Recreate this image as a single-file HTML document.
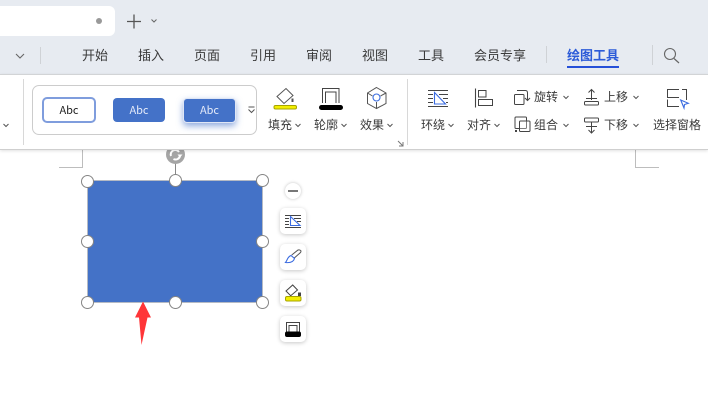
<!DOCTYPE html>
<html>
<head>
<meta charset="utf-8">
<style>
html,body{margin:0;padding:0;width:708px;height:413px;overflow:hidden;background:#fff}
body{position:relative;font-family:"Liberation Sans","Noto Sans CJK SC",sans-serif;color:#333}
.a{position:absolute}
.t{position:absolute;white-space:nowrap;line-height:16px;height:16px}
.tab{font-size:13px;top:48px;color:#3a3a3a}
.lb{font-size:12px;color:#3a3a3a}
.abc{position:absolute;box-sizing:border-box;text-align:center;font-family:"Noto Sans CJK SC","Liberation Sans",sans-serif;font-size:11px;line-height:24px;border-radius:4px}
.side{position:absolute;left:280px;width:26px;height:26px;background:#fff;border-radius:5px;box-shadow:0 1px 4px rgba(0,0,0,.22)}
.h{position:absolute;width:13px;height:13px;box-sizing:border-box;background:#fff;border:1px solid #858585;border-radius:50%}
svg{position:absolute;overflow:visible}
</style>
</head>
<body>
<div class="a" style="left:0;top:0;width:708px;height:74px;background:#e7ebf1"></div>
<div class="a" style="left:-10px;top:6px;width:125px;height:30px;background:#fff;border-radius:6px"></div>
<div class="a" style="left:96px;top:18px;width:6px;height:6px;background:#999;border-radius:50%"></div>
<svg style="left:0;top:0" width="708" height="74" fill="none">
<path d="M127 21.500H141M134 14.500V28.500" stroke="#555" stroke-width="1.300"/>
<path d="M151.500 19.500L154 22L156.500 19.500" stroke="#666"/>
<path d="M16 54L20 58L24 54" stroke="#666" stroke-width="1.100"/>
<path d="M40.500 47V64M546.500 46V63M652.500 45V65" stroke="#cfd2d6"/>
<circle cx="670" cy="54" r="5.500" stroke="#666" stroke-width="1.100"/>
<path d="M674 58.500L679 63" stroke="#666" stroke-width="1.200"/>
</svg>
<div class="t tab" style="left:82px">开始</div>
<div class="t tab" style="left:138px">插入</div>
<div class="t tab" style="left:194px">页面</div>
<div class="t tab" style="left:250px">引用</div>
<div class="t tab" style="left:306px">审阅</div>
<div class="t tab" style="left:362px">视图</div>
<div class="t tab" style="left:418px">工具</div>
<div class="t tab" style="left:474px">会员专享</div>
<div class="t tab" style="left:567px;color:#2c5bd8;font-weight:bold">绘图工具</div>
<div class="a" style="left:567px;top:66px;width:52px;height:2px;background:#2650d8"></div>

<div class="a" style="left:0;top:74px;width:708px;height:76px;box-sizing:border-box;background:#fff;border-top:1px solid #d2d4d6;border-bottom:1px solid #cfcfcf;box-shadow:0 1px 3px rgba(0,0,0,.12);z-index:3">
</div>

<div style="position:absolute;left:0;top:0;width:708px;height:150px;z-index:4">
<div class="a" style="left:23px;top:79px;width:1px;height:66px;background:#d8d8d8"></div>
<div class="a" style="left:407px;top:79px;width:1px;height:66px;background:#d8d8d8"></div>
<div class="a" style="left:32px;top:85px;width:225px;height:50px;box-sizing:border-box;border:1px solid #cccccc;border-radius:7px"></div>
<div class="abc" style="left:42px;top:97px;width:54px;height:26px;border:2px solid #7f9ddd;border-radius:5px;background:#fff;color:#222;line-height:22px">Abc</div>
<div class="abc" style="left:113px;top:98px;width:52px;height:24px;background:#4472c8;color:#e4eaf8">Abc</div>
<div class="abc" style="left:183px;top:98px;width:53px;height:25px;background:#4472c8;color:#e4eaf8;border:1px solid #dfe6f5;line-height:23px;box-shadow:0 3px 7px rgba(68,114,200,.6)">Abc</div>

<div class="t lb" style="left:268px;top:117px">填充</div>
<div class="t lb" style="left:314px;top:117px">轮廓</div>
<div class="t lb" style="left:360px;top:117px">效果</div>
<div class="t lb" style="left:421px;top:117px">环绕</div>
<div class="t lb" style="left:467px;top:117px">对齐</div>
<div class="t lb" style="left:534px;top:89px">旋转</div>
<div class="t lb" style="left:534px;top:117px">组合</div>
<div class="t lb" style="left:604px;top:89px">上移</div>
<div class="t lb" style="left:604px;top:117px">下移</div>
<div class="t lb" style="left:653px;top:117px">选择窗格</div>

<svg style="left:0;top:0" width="708" height="150" fill="none">
<!-- chevrons -->
<g stroke="#555">
<path d="M3.500 124L6 126.500L8.500 124M295.500 124L298 126.500L300.500 124M341.500 124L344 126.500L346.500 124M387.500 124L390 126.500L392.500 124M448.500 124L451 126.500L453.500 124M494.500 124L497 126.500L499.500 124M563.500 124L566 126.500L568.500 124M563.500 96L566 98.500L568.500 96M633.500 124L636 126.500L638.500 124M633.500 96L636 98.500L638.500 96"/>
</g>
<!-- gallery more -->
<path d="M248.500 107H254.500M248.500 109.500L251.500 112.500L254.500 109.500" stroke="#555"/>
<!-- fill -->
<path d="M277 96.500L286 88.500L293 95.500L284 103.500Z" stroke="#555" fill="#fff"/>
<rect x="291.500" y="98.500" width="2" height="3.500" fill="#555"/>
<rect x="274" y="105.500" width="22.500" height="3.500" rx="1.500" fill="#f3ee00" stroke="#a7a400"/>
<!-- outline -->
<path d="M322.500 103V88.500H339V103M325.500 103V92H336V103" stroke="#444"/>
<rect x="319" y="105" width="24" height="5" rx="2.500" fill="#000"/>
<!-- effect -->
<path d="M376.500 87.500L386 93V103.500L376.500 108.500L367.500 103.500V93Z M367.500 93L372.500 96M386 93L380.500 96M376.500 102V108" stroke="#555"/>
<circle cx="376.500" cy="97.500" r="3.500" stroke="#3c6ee0" stroke-width="1.100"/>
<!-- dialog launcher -->
<path d="M398 141L403 146M403 142V146H399" stroke="#777"/>
<!-- wrap -->
<path d="M428 90.500H448M428 106.500H448M428 94.500H433M428 98.500H433M428 102.500H433M439 94.500H448M443 98.500H448M446 102.500H448" stroke="#444"/>
<path d="M434.500 92.500V104H445.500Z" stroke="#3a6be0" stroke-width="1.100"/>
<!-- align -->
<path d="M475.500 88.500V107.500" stroke="#444" stroke-width="1.100"/>
<rect x="478.500" y="90.500" width="7.500" height="6.500" stroke="#444"/>
<rect x="478.500" y="99.500" width="14" height="6" stroke="#444"/>
<!-- rotate -->
<rect x="514.500" y="94.500" width="9.500" height="10" rx="1" stroke="#444"/>
<path d="M517 90.500H525.500Q527.500 90.500 527.500 93V100M525 98L527.500 100.500L530 98" stroke="#444"/>
<!-- group -->
<rect x="515" y="117" width="11.500" height="11.500" rx="1" stroke="#444"/>
<rect x="519.500" y="121" width="10.500" height="10.500" rx="1" stroke="#444" fill="#fff" fill-opacity=".3"/>
<rect x="515" y="130" width="2" height="2" fill="#444"/>
<!-- up -->
<path d="M591.500 90V100M588.500 92.500L591.500 89.500L594.500 92.500M586 98.500H597" stroke="#444"/>
<rect x="584.500" y="101.500" width="14" height="3.500" rx="1" stroke="#444"/>
<!-- down -->
<rect x="584.500" y="118" width="14" height="4" rx="1" stroke="#444"/>
<path d="M586 126.500H597M591.500 122V133M588.500 130L591.500 133L594.500 130" stroke="#444"/>
<!-- selection pane -->
<path d="M679 89.500H667.500V97.500H679M682 89.500H686.500V100M667.500 99.500V106.500H679" stroke="#444"/>
<path d="M680.700 100L688.300 103.300L684.500 104.500L684 108Z" stroke="#3a6be0" stroke-width="1.100" fill="#fff"/>
</svg>
</div>

<!-- page corners -->
<div class="a" style="left:82px;top:150px;width:1px;height:17px;background:#bdbdbd"></div>
<div class="a" style="left:59px;top:167px;width:24px;height:1px;background:#bdbdbd"></div>
<div class="a" style="left:635px;top:150px;width:1px;height:17px;background:#bdbdbd"></div>
<div class="a" style="left:635px;top:167px;width:24px;height:1px;background:#bdbdbd"></div>

<!-- rotate handle -->
<div class="a" style="left:175px;top:160px;width:1px;height:20px;background:#888"></div>
<div class="a" style="left:166px;top:145px;width:19px;height:19px;background:#a5a5a5;border-radius:50%;z-index:1"></div>
<svg style="left:166px;top:145px;z-index:2" width="19" height="19" fill="none">
<path d="M5 11A4.500 4.500 0 0 1 13 7M14 11A4.500 4.500 0 0 1 7.500 14" stroke="#fff" stroke-width="2"/>
<path d="M11.500 9.500H16.500L14 12.500Z" fill="#fff"/>
</svg>

<!-- shape -->
<div class="a" style="left:87px;top:180px;width:176px;height:123px;box-sizing:border-box;background:#4472c7;border:1px solid #b5bac4"></div>
<div class="h" style="left:81px;top:175px"></div>
<div class="h" style="left:169px;top:174px"></div>
<div class="h" style="left:256px;top:174px"></div>
<div class="h" style="left:81px;top:235px"></div>
<div class="h" style="left:256px;top:235px"></div>
<div class="h" style="left:81px;top:296px"></div>
<div class="h" style="left:169px;top:296px"></div>
<div class="h" style="left:256px;top:296px"></div>

<!-- arrow -->
<svg style="left:0;top:0" width="708" height="413">
<path d="M143 301.500L151 317.500H147.500L141.500 345L139 317.500H135Z" fill="#ff3538"/>
</svg>

<!-- side toolbar -->
<div class="a" style="left:285px;top:183px;width:16px;height:16px;background:#fff;border-radius:50%;box-shadow:0 0 3px rgba(0,0,0,.25)"></div>
<div class="a" style="left:288px;top:190px;width:10px;height:2px;background:#777"></div>
<div class="side" style="top:208px"></div>
<div class="side" style="top:244px"></div>
<div class="side" style="top:280px"></div>
<div class="side" style="top:316px"></div>
<svg style="left:0;top:0" width="708" height="413" fill="none">
<path d="M285 215.500H301M285 227.500H301M294 218.500H301M297 221.500H301M285 218.500H289M285 221.500H289M285 224.500H289" stroke="#444"/>
<path d="M290.500 216.500V225.500H300Z" stroke="#3a6be0" stroke-width="1.100"/>
<path d="M291.700 255L298 250Q299.500 249.500 300.700 250.500Q301.300 251.500 300.500 252.500L294 258.300" stroke="#555"/>
<path d="M285.500 262.500C287.500 260.500 287 257 291 255.500L294.500 258.500C293.500 262 290 263 285.500 262.500Z" stroke="#3a6be0" stroke-width="1.100"/>
<path d="M286 291L292.700 285L297.500 290L290.700 295.700Z" stroke="#444"/>
<rect x="298" y="292.500" width="3" height="3.500" fill="#444"/>
<rect x="285.500" y="296.500" width="15.500" height="4.500" rx="1.500" fill="#f3ee00" stroke="#a7a400"/>
<path d="M286.500 332V322.500H299.500V332M289 332V325.500H297V332" stroke="#444"/>
<rect x="285" y="331.500" width="16" height="5.500" rx="2" fill="#000"/>
</svg>
</body>
</html>
